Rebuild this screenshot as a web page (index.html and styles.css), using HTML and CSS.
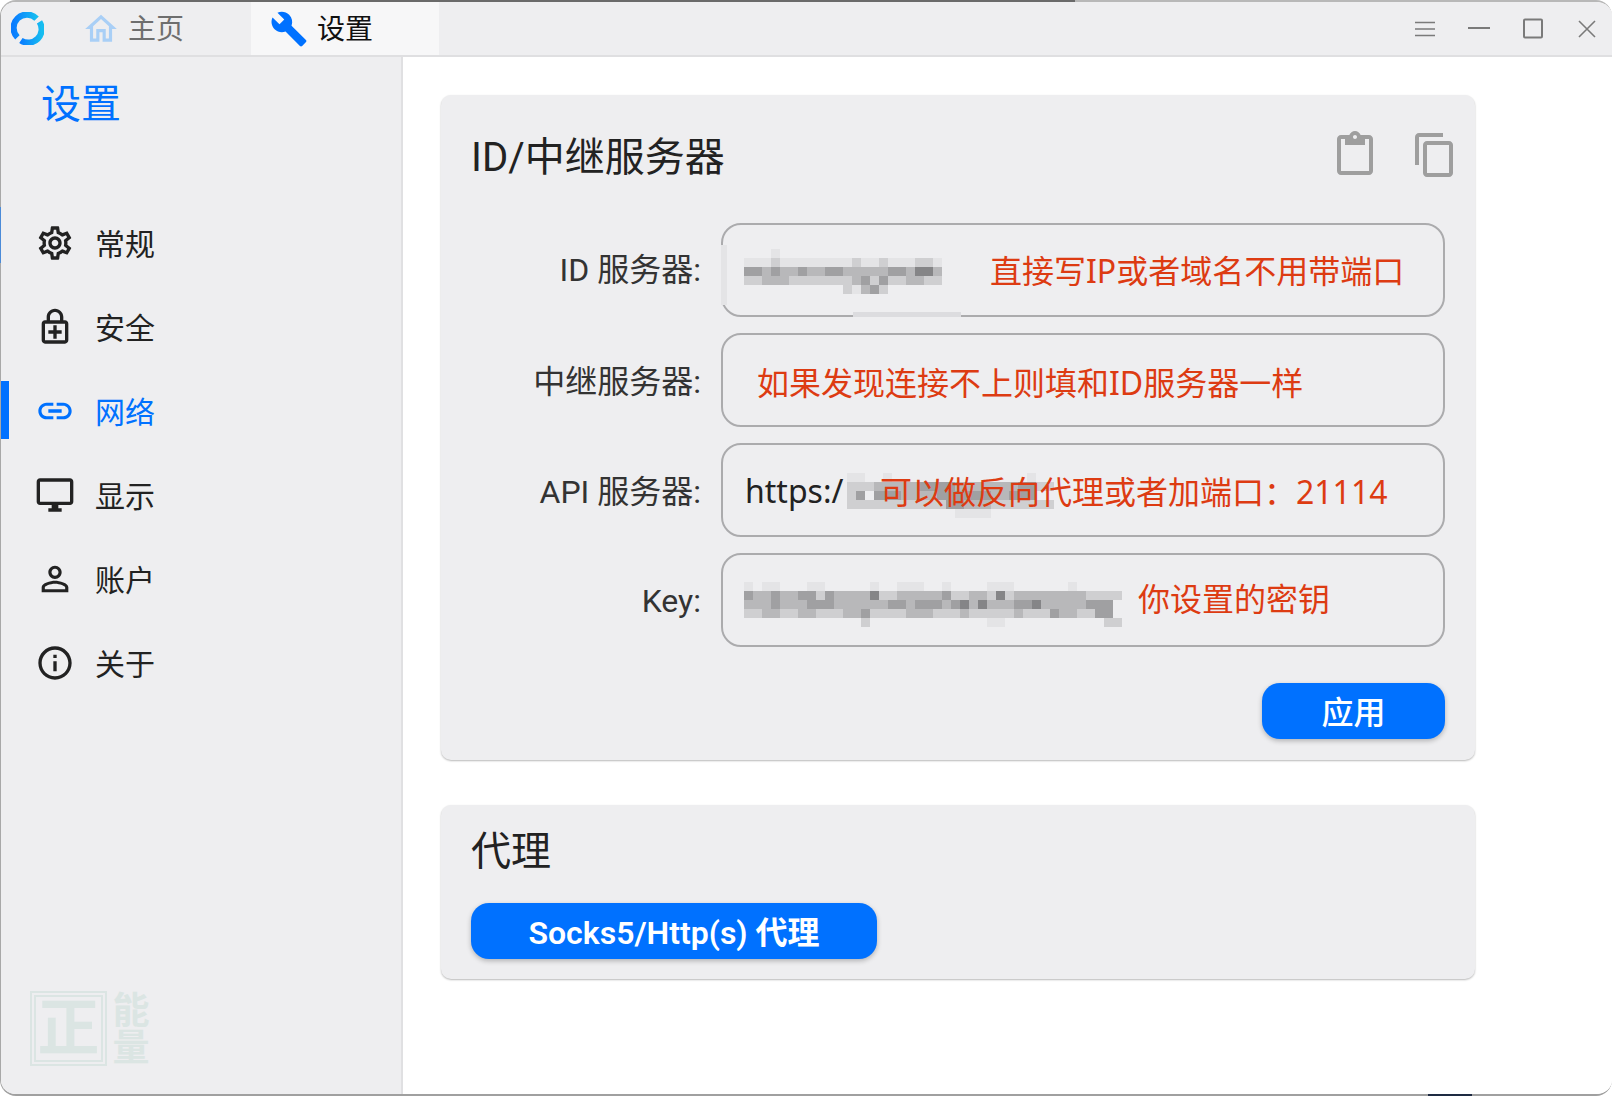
FILE: index.html
```html
<!DOCTYPE html>
<html lang="zh-CN">
<head>
<meta charset="utf-8">
<title>设置</title>
<link rel="stylesheet" href="styles.css">
</head>
<body>
<div class="frame">
<div class="window">
  <header class="titlebar">
    <svg class="logo" viewBox="0 0 32 32"><defs><linearGradient id="lg" x1="0" y1="0" x2="1" y2="0"><stop offset="0" stop-color="#0a7dff"/><stop offset="1" stop-color="#16bdf0"/></linearGradient></defs><path d="M6.200 24.600A13 13 0 0 1 24.800 6.400" fill="none" stroke="url(#lg)" stroke-width="6"/><path d="M27.600 9.600A13 13 0 0 1 9.600 27.600" fill="none" stroke="url(#lg)" stroke-width="6"/></svg>
    <div class="tab tab-home">
      <svg class="tab-icon home" viewBox="0 0 24 24"><path d="M12 5.690l5 4.500V18h-2v-6H9v6H7v-7.810l5-4.500M12 3L2 12h3v8h6v-6h2v6h6v-8h3L12 3z"/></svg>
      <span>主页</span>
    </div>
    <div class="tab tab-active">
      <svg class="tab-icon wrench" viewBox="0 0 24 24"><path d="M22.700 19l-9.100-9.100c.9-2.300.4-5-1.500-6.900-2-2-5-2.400-7.400-1.300L9 6 6 9 1.600 4.700C.4 7.100.9 10.100 2.900 12.100c1.900 1.900 4.600 2.400 6.900 1.500l9.100 9.100c.4.4 1 .4 1.400 0l2.300-2.300c.5-.4.5-1.100.1-1.400z"/></svg>
      <span>设置</span>
    </div>
    <div class="controls">
      <svg class="ctl" viewBox="0 0 24 24"><path d="M2 5.500h20M2 12h20M2 18.500h20" stroke-width="1.300"/></svg>
      <svg class="ctl" viewBox="0 0 24 24"><path d="M1 11h22" stroke-width="2"/></svg>
      <svg class="ctl" viewBox="0 0 24 24"><rect x="3" y="2.500" width="18" height="18" rx="1" stroke-width="2"/></svg>
      <svg class="ctl" viewBox="0 0 24 24"><path d="M4 4l16 16M20 4L4 20" stroke-width="1.600"/></svg>
    </div>
  </header>
  <div class="content">
    <aside class="sidebar">
      <h1 class="side-title">设置</h1>
      <nav class="nav">
        <div class="nav-item">
          <svg class="nav-icon" viewBox="0 0 24 24"><path d="M19.430 12.980c.04-.32.07-.64.07-.98 0-.34-.03-.66-.07-.98l2.110-1.650c.19-.15.24-.42.12-.64l-2-3.460c-.09-.16-.26-.25-.44-.25-.06 0-.12.01-.17.03l-2.490 1c-.52-.4-1.080-.73-1.690-.98l-.38-2.650C14.460 2.180 14.250 2 14 2h-4c-.25 0-.46.18-.49.42l-.38 2.650c-.61.25-1.170.59-1.690.98l-2.490-1c-.06-.02-.12-.03-.18-.03-.17 0-.34.09-.43.25l-2 3.460c-.13.22-.07.49.12.64l2.110 1.650c-.04.32-.07.65-.07.98 0 .33.03.66.07.98l-2.110 1.650c-.19.15-.24.42-.12.64l2 3.460c.09.16.26.25.44.25.06 0 .12-.01.17-.03l2.490-1c.52.4 1.080.73 1.690.98l.38 2.650c.03.24.24.42.49.42h4c.25 0 .46-.18.49-.42l.38-2.650c.61-.25 1.170-.59 1.690-.98l2.490 1c.06.02.12.03.18.03.17 0 .34-.09.43-.25l2-3.460c.12-.22.07-.49-.12-.64l-2.110-1.650zm-1.980-1.710c.04.31.05.52.05.73 0 .21-.02.43-.05.73l-.14 1.130.89.7 1.080.84-.7 1.210-1.270-.51-1.040-.42-.9.68c-.43.32-.84.56-1.250.73l-1.060.43-.16 1.130-.2 1.350h-1.400l-.19-1.350-.16-1.130-1.060-.43c-.43-.18-.83-.41-1.230-.71l-.91-.7-1.060.43-1.270.51-.7-1.210 1.080-.84.89-.7-.14-1.130c-.03-.31-.05-.54-.05-.74s.02-.43.05-.73l.14-1.130-.89-.7-1.080-.84.7-1.210 1.270.51 1.040.42.9-.68c.43-.32.84-.56 1.250-.73l1.060-.43.16-1.130.2-1.350h1.390l.19 1.350.16 1.130 1.060.43c.43.18.83.41 1.230.71l.91.7 1.060-.43 1.270-.51.7 1.210-1.070.85-.89.7.14 1.130zM12 8c-2.210 0-4 1.790-4 4s1.790 4 4 4 4-1.790 4-4-1.790-4-4-4zm0 6c-1.100 0-2-.9-2-2s.9-2 2-2 2 .9 2 2-.9 2-2 2z"/></svg>
          <span>常规</span>
        </div>
        <div class="nav-item">
          <svg class="nav-icon" viewBox="0 0 24 24"><path d="M18 8h-1V6c0-2.760-2.240-5-5-5S7 3.240 7 6v2H6c-1.100 0-2 .9-2 2v10c0 1.100.9 2 2 2h12c1.100 0 2-.9 2-2V10c0-1.100-.9-2-2-2zM9 6c0-1.660 1.340-3 3-3s3 1.340 3 3v2H9V6zm9 14H6V10h12v10zm-7-1h2v-3h3v-2h-3v-3h-2v3H8v2h3z"/></svg>
          <span>安全</span>
        </div>
        <div class="nav-item nav-active">
          <svg class="nav-icon" viewBox="0 0 24 24"><path d="M3.900 12c0-1.710 1.390-3.100 3.100-3.100h4V7H7c-2.760 0-5 2.240-5 5s2.240 5 5 5h4v-1.900H7c-1.710 0-3.100-1.390-3.100-3.100zM8 13h8v-2H8v2zm9-6h-4v1.900h4c1.710 0 3.100 1.390 3.100 3.100s-1.390 3.100-3.100 3.100h-4V17h4c2.760 0 5-2.240 5-5s-2.240-5-5-5z"/></svg>
          <span>网络</span>
        </div>
        <div class="nav-item">
          <svg class="nav-icon" viewBox="0 0 24 24"><path d="M21 2H3c-1.100 0-2 .9-2 2v12c0 1.100.9 2 2 2h7v2H8v2h8v-2h-2v-2h7c1.100 0 2-.9 2-2V4c0-1.100-.9-2-2-2zm0 14H3V4h18v12z"/></svg>
          <span>显示</span>
        </div>
        <div class="nav-item">
          <svg class="nav-icon" viewBox="0 0 24 24"><path d="M12 5.900c1.160 0 2.100.94 2.100 2.100s-.94 2.100-2.100 2.100S9.900 9.160 9.900 8s.94-2.100 2.100-2.100m0 9c2.970 0 6.100 1.460 6.100 2.100v1.100H5.900V17c0-.64 3.130-2.100 6.100-2.100M12 4C9.790 4 8 5.790 8 8s1.790 4 4 4 4-1.790 4-4-1.790-4-4-4zm0 9c-2.670 0-8 1.340-8 4v3h16v-3c0-2.660-5.330-4-8-4z"/></svg>
          <span>账户</span>
        </div>
        <div class="nav-item">
          <svg class="nav-icon" viewBox="0 0 24 24"><path d="M11 7h2v2h-2zm0 4h2v6h-2zm1-9C6.480 2 2 6.480 2 12s4.480 10 10 10 10-4.480 10-10S17.520 2 12 2zm0 18c-4.410 0-8-3.590-8-8s3.590-8 8-8 8 3.590 8 8-3.590 8-8 8z"/></svg>
          <span>关于</span>
        </div>
      </nav>
      <div class="mark">
        <div class="mark-frame"><span>正</span></div>
        <div class="mark-side">能量</div>
      </div>
    </aside>
    <main class="main">
      <section class="card card-server">
        <div class="card-head">
          <h2 class="card-title">ID/中继服务器</h2>
          <div class="card-tools">
            <svg class="tool" viewBox="0 0 24 24"><path d="M19 2h-4.180C14.400.84 13.300 0 12 0c-1.300 0-2.400.84-2.820 2H5c-1.100 0-2 .9-2 2v16c0 1.100.9 2 2 2h14c1.100 0 2-.9 2-2V4c0-1.100-.9-2-2-2zm-7 0c.55 0 1 .45 1 1s-.45 1-1 1-1-.45-1-1 .45-1 1-1zm7 18H5V4h2v3h10V4h2v16z"/></svg>
            <svg class="tool" viewBox="0 0 24 24"><path d="M16 1H4c-1.100 0-2 .9-2 2v14h2V3h12V1zm3 4H8c-1.100 0-2 .9-2 2v14c0 1.100.9 2 2 2h11c1.100 0 2-.9 2-2V7c0-1.100-.9-2-2-2zm0 16H8V7h11v14z"/></svg>
          </div>
        </div>
        <div class="form">
          <label class="label label-up">ID 服务器:</label>
          <div class="input">
            <svg class="px px-id" viewBox="0 0 198 45" width="198" height="45">
              <path class="p1" d="M27 4.500h9M0 13.500h198M108 40.500h27"/>
              <path class="p2" d="M0 31.500h198M27 13.500h9M108 13.500h9M135 13.500h9M171 13.500h18M99 40.500h9M135 40.500h9"/>
              <path class="p3" d="M0 22.500h198M18 31.500h27M108 31.500h18M135 31.500h9M162 31.500h18M117 40.500h9"/>
              <path class="p4" d="M0 22.500h18M27 22.500h9M54 22.500h9M81 22.500h18M144 22.500h18M117 31.500h9M135 31.500h9M126 40.500h9"/>
              <path class="p5" d="M171 22.500h18"/>
            </svg>
            <span class="glitch-left"></span><span class="glitch-bottom"></span>
            <span class="note note-1">直接写IP或者域名不用带端口</span>
          </div>
          <label class="label">中继服务器:</label>
          <div class="input">
            <span class="note note-2">如果发现连接不上则填和ID服务器一样</span>
          </div>
          <label class="label">API 服务器:</label>
          <div class="input">
            <span class="value">https:/</span>
            <svg class="px px-api" viewBox="0 0 207 45" width="207" height="45">
              <path class="p1" d="M0 4.500h18M36 4.500h9M180 4.500h9M108 40.500h36"/>
              <path class="p2" d="M0 13.500h207M0 31.500h207M0 22.500h9"/>
              <path class="p3" d="M27 13.500h153M27 22.500h153M99 31.500h45"/>
              <path class="p4" d="M9 22.500h9M27 22.500h27M72 13.500h36M90 22.500h54M162 22.500h27M99 31.500h18M171 13.500h18"/>
            </svg>
            <span class="note note-3">可以做反向代理或者加端口：21114</span>
          </div>
          <label class="label label-down">Key:</label>
          <div class="input">
            <svg class="px px-key" viewBox="0 0 378 45" width="378" height="45">
              <path class="p1" d="M0 4.500h9M18 4.500h18M63 4.500h18M126 4.500h9M153 4.500h27M198 4.500h9M243 4.500h27M324 4.500h9M243 40.500h18"/>
              <path class="p2" d="M0 31.500h369M63 13.500h18M135 13.500h18M207 13.500h18M243 13.500h27M342 13.500h36M252 22.500h9M297 22.500h9M117 40.500h9M360 40.500h18"/>
              <path class="p3" d="M0 22.500h369M9 13.500h54M81 13.500h54M153 13.500h54M225 13.500h18M270 13.500h72M18 31.500h18M54 31.500h18M99 31.500h18M162 31.500h27M216 31.500h9M270 31.500h9M306 31.500h27M351 31.500h9"/>
              <path class="p4" d="M0 13.500h9M27 13.500h9M54 13.500h18M81 13.500h9M27 22.500h9M63 22.500h27M144 22.500h18M171 22.500h27M207 22.500h18M270 22.500h18M342 22.500h27M117 31.500h9M198 13.500h9M306 31.500h9M351 31.500h18"/>
              <path class="p5" d="M126 13.500h9M252 13.500h9M216 22.500h9M234 22.500h9M288 22.500h9"/>
            </svg>
            <span class="note note-4">你设置的密钥</span>
          </div>
        </div>
        <div class="actions"><button class="btn btn-apply">应用</button></div>
      </section>
      <section class="card card-proxy">
        <div class="card-head"><h2 class="card-title">代理</h2></div>
        <button class="btn btn-proxy">Socks5/Http(s) 代理</button>
      </section>
    </main>
  </div>
</div>
<div class="edge edge-dark"></div>
<div class="edge edge-bit"></div>
<div class="edge edge-blue"></div>
</div>
</body>
</html>
```
FILE: styles.css
```css
* { box-sizing: border-box; }
html, body { margin: 0; height: 100%; background: #fff; overflow: hidden; }
body { font-family: Roboto, "Noto Sans CJK SC", sans-serif; color: #222; }

.frame { position: relative; height: 1096px; }
.window {
  height: 1096px;
  display: flex;
  flex-direction: column;
  border-top: 2px solid #b8b8b8;
  border-left: 1px solid #a8a8a8;
  border-bottom: 2px solid #a0a0a0;
  border-radius: 16px;
  overflow: hidden;
  background: #fff;
}
.edge { position: absolute; }
.edge-dark { left: 70px; top: 0; width: 1005px; height: 2px; background: #6a6a6a; }
.edge-bit { left: 1428px; bottom: 0; width: 44px; height: 2px; background: #1e2b42; }
.edge-blue { left: 0; top: 207px; width: 1px; height: 56px; background: #4a8ad8; }

.titlebar {
  flex: none;
  height: 55px;
  display: flex;
  align-items: stretch;
  background: #eeeef0;
  border-bottom: 2px solid #dfdfe1;
}
.logo { width: 33px; height: 33px; align-self: center; margin-left: 10px; margin-right: 27px; }
.tab { display: flex; align-items: center; font-size: 28px; height: 53px; }
.tab span { margin-bottom: 3px; }
.tab-home { width: 180px; color: #6e6e6e; gap: 8px; padding-left: 11px; }
.tab-active { width: 188px; background: #f7f7f8; color: #111; gap: 9px; padding-left: 19px; }
.tab-icon { width: 38px; height: 38px; flex: none; }
.home { fill: #a9cff6; }
.wrench { fill: #0071ff; }
.controls { margin-left: auto; display: flex; align-items: center; gap: 30px; padding-right: 13px; }
.ctl { width: 24px; height: 24px; fill: none; stroke: #7a7a7a; }

.content { flex: 1; display: flex; min-height: 0; }
.sidebar {
  flex: none;
  width: 402px;
  background: #eeeef0;
  border-right: 2px solid #e0e0e2;
  display: flex;
  flex-direction: column;
  padding-bottom: 28px;
}
.side-title { margin: 21px 0 0 40px; font-size: 40px; line-height: 54px; font-weight: 400; color: #0071ff; }
.nav { margin-top: 68px; }
.nav-item {
  position: relative;
  height: 84px;
  display: flex;
  align-items: center;
  gap: 20px;
  padding-left: 34px;
  font-size: 30px;
  color: #222;
}
.nav-item span { margin-bottom: 1px; }
.nav-icon { width: 40px; height: 40px; fill: #222; flex: none; margin-top: 2px; }
.nav-active { color: #0071ff; }
.nav-active .nav-icon { fill: #0071ff; }
.nav-active::before { content: ""; position: absolute; left: 0; top: 13px; width: 8px; height: 58px; background: #0071ff; }

.mark { margin-top: auto; margin-left: 29px; display: flex; gap: 1px; color: #dbe5e3; font-weight: 700; }
.mark-frame {
  width: 77px; height: 75px;
  border: 6px double #dbe5e3;
  display: flex; align-items: center; justify-content: center;
  font-size: 62px; line-height: 1;
}
.mark-side { width: 38px; height: 75px; writing-mode: vertical-rl; font-size: 37px; line-height: 38px; letter-spacing: 0; }

.main { flex: 1; padding: 38px 137px 0 38px; background: #fff; }
.card {
  background: #eeeef0;
  border-radius: 10px;
  box-shadow: 0 1px 2px rgba(0,0,0,.28);
  padding: 0 30px;
}
.card-server { height: 665px; padding-top: 29px; }
.card-proxy { height: 174px; margin-top: 45px; padding-top: 13px; }
.card-head { height: 60px; display: flex; align-items: center; justify-content: space-between; }
.card-title { margin: 0; font-size: 40px; font-weight: 400; color: #222; }
.card-tools { display: flex; gap: 32px; margin-right: -14px; margin-top: 1px; }
.tool { width: 48px; height: 48px; fill: #9e9e9e; }

.form {
  margin-top: 39px;
  display: grid;
  grid-template-columns: 1fr 724px;
  column-gap: 20px;
  row-gap: 16px;
}
.label { display: flex; align-items: center; justify-content: flex-end; font-size: 32px; color: #333; padding-bottom: 3px; }
.label-up { padding-bottom: 6px; }
.label-down { padding-bottom: 0; padding-top: 1px; }
.input {
  position: relative;
  height: 94px;
  border: 2px solid #ababad;
  border-radius: 20px;
  display: flex;
  align-items: center;
  padding-left: 22px;
  font-size: 32px;
}
.value { color: #222; font-family: "Noto Sans", sans-serif; }
.px { position: absolute; fill: none; stroke-width: 9; }
.px-id { left: 21px; top: 24px; }
.px-api { left: 124px; top: 28px; }
.px-key { left: 21px; top: 27px; }
.p1 { stroke: #e4e4e6; }
.p2 { stroke: #cfcfd1; }
.p3 { stroke: #b8b8ba; }
.p4 { stroke: #a0a0a2; }
.p5 { stroke: #858587; }
.glitch-left { position: absolute; left: -2px; top: 20px; width: 6px; height: 60px; background: #e4e4e6; }
.glitch-bottom { position: absolute; left: 130px; bottom: -2px; width: 108px; height: 5px; background: #dcdcdf; }
.note { position: absolute; font-family: "Noto Sans", "Noto Sans CJK SC", sans-serif; font-size: 32px; line-height: 44px; color: #dd3b12; white-space: nowrap; }
.note-1 { left: 267px; top: 24px; }
.note-2 { left: 34px; top: 26px; }
.note-3 { left: 157px; top: 25px; }
.note-4 { left: 415px; top: 22px; }

.actions { margin-top: 36px; display: flex; justify-content: flex-end; }
.btn {
  border: 0;
  height: 56px;
  border-radius: 18px;
  background: #0071ff;
  color: #fff;
  font-family: inherit;
  font-size: 32px;
  font-weight: 500;
  box-shadow: 0 2px 5px rgba(0,0,0,.25);
  padding: 0 0 3px;
}
.btn-apply { width: 183px; }
.btn-proxy { display: block; width: 406px; margin-top: 25px; font-weight: 600; }
```
